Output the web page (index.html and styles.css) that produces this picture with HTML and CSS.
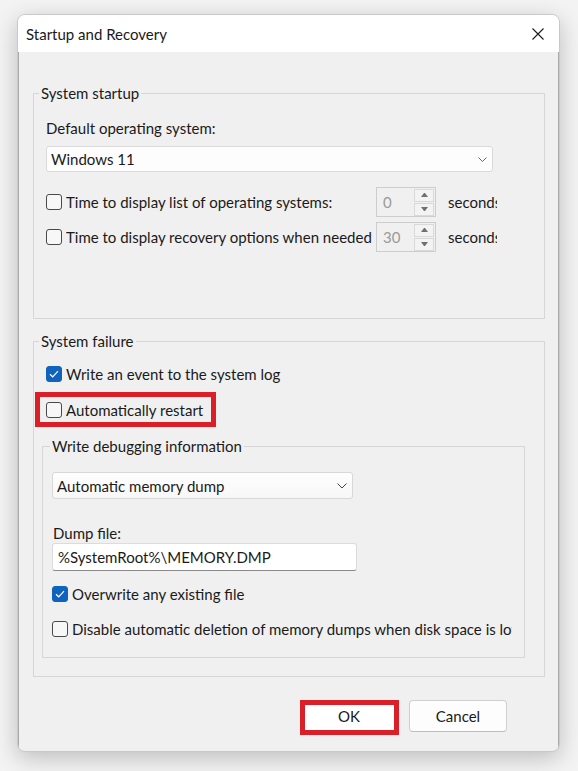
FILE: index.html
```html
<!DOCTYPE html>
<html>
<head>
<meta charset="utf-8">
<link rel="stylesheet" href="styles.css">
</head>
<body>
<div class="dialog">
  <div class="titlebar">
    <span class="title">Startup and Recovery</span>
    <span class="close"><svg width="12" height="12" viewBox="0 0 12 12"><path d="M0.5 0.5 L11.5 11.5 M11.5 0.5 L0.5 11.5" stroke="#1b1b1b" stroke-width="1.1" fill="none"/></svg></span>
  </div>
  <div class="content">
    <fieldset class="group g-startup">
      <legend>System startup</legend>
      <div class="lbl l-default">Default operating system:</div>
      <div class="select sel-os">
        <span>Windows 11</span>
        <svg class="chev" width="9" height="5" viewBox="0 0 9 5"><path d="M0.5 0.5 L4.5 4.5 L8.5 0.5" stroke="#666" stroke-width="1" fill="none"/></svg>
      </div>
      <div class="row spinrow r-first">
        <span class="cb"></span>
        <span class="txt t-time">Time to display list of operating systems:</span>
        <div class="spin">
          <span class="val">0</span>
          <span class="arrows"><span class="arr up"></span><span class="arr down"></span></span>
        </div>
        <span class="sec">seconds</span>
      </div>
      <div class="row spinrow r-second">
        <span class="cb"></span>
        <span class="txt t-time">Time to display recovery options when needed:</span>
        <div class="spin">
          <span class="val">30</span>
          <span class="arrows"><span class="arr up"></span><span class="arr down"></span></span>
        </div>
        <span class="sec">seconds</span>
      </div>
    </fieldset>

    <fieldset class="group g-failure">
      <legend>System failure</legend>
      <div class="row r-event"><span class="cb checked"><svg width="10" height="8" viewBox="0 0 10 8"><path d="M1 4.2 L3.7 6.8 L9 1.2" stroke="#fff" stroke-width="1.2" fill="none"/></svg></span><span class="txt">Write an event to the system log</span></div>
      <div class="row r-restart"><span class="mark"><span class="cb"></span><span class="txt">Automatically restart</span></span></div>

      <fieldset class="group g-debug">
        <legend>Write debugging information</legend>
        <div class="select sel-dump">
          <span>Automatic memory dump</span>
          <svg class="chev" width="10" height="6" viewBox="0 0 10 6"><path d="M0.5 0.5 L5 5 L9.5 0.5" stroke="#444" stroke-width="1" fill="none"/></svg>
        </div>
        <div class="lbl l-dump">Dump file:</div>
        <div class="input">%SystemRoot%\MEMORY.DMP</div>
        <div class="row r-over"><span class="cb checked"><svg width="10" height="8" viewBox="0 0 10 8"><path d="M1 4.2 L3.7 6.8 L9 1.2" stroke="#fff" stroke-width="1.2" fill="none"/></svg></span><span class="txt">Overwrite any existing file</span></div>
        <div class="row r-disable"><span class="cb"></span><span class="txt t-disable">Disable automatic deletion of memory dumps when disk space is low</span></div>
      </fieldset>
    </fieldset>

    <div class="buttons">
      <button class="btn ok">OK</button>
      <button class="btn">Cancel</button>
    </div>
  </div>
</div>
</body>
</html>
```
FILE: styles.css
```css
*, *::before, *::after { box-sizing: border-box; }
html, body { margin: 0; padding: 0; }
body {
  background: #f3f3f3;
  font-family: Lato, "Open Sans", sans-serif;
  font-size: 15px;
  color: #1a1a1a;
  width: 578px;
  height: 771px;
  overflow: hidden;
  padding: 14px 0 0 17px;
}
.dialog {
  width: 543px;
  height: 738px;
  border: 1px solid #c9c9c9;
  border-radius: 8px;
  background: #f0f0f0;
  box-shadow: 0 6px 22px rgba(0,0,0,0.22);
  overflow: hidden;
  display: flex;
  flex-direction: column;
}
.titlebar {
  height: 37px;
  background: #ffffff;
  display: flex;
  align-items: center;
  justify-content: space-between;
  padding: 0 15px 0 8px;
  flex-shrink: 0;
}
.title { line-height: 20px; }
.close { display: flex; width: 12px; height: 12px; }
.content {
  flex: 1;
  padding: 31px 14px 0 15px;
  box-shadow: inset 1px 0 #a9a9a9, inset -1px 0 #a9a9a9;
}
fieldset.group {
  margin: 0;
  border: 1px solid #d6d6d6;
  border-radius: 0;
  padding: 0 12px;
  min-width: 0;
}
fieldset.group > legend {
  padding: 0 2px;
  margin-left: -7px;
  line-height: 20px;
  height: 20px;
}
.g-startup { padding-bottom: 66px !important; }
.g-failure { margin-top: 12px !important; padding-bottom: 18px !important; }
.g-debug {
  margin: 15px 7px 0 -4px !important;
  padding: 0 9px 17px 9px !important;
}
.g-debug > legend { margin-left: -2px !important; }

.lbl { line-height: 20px; height: 20px; }
.l-default { margin-top: 15px; }
.l-dump { margin-top: 24px; padding-left: 1px; }

.select {
  display: flex;
  align-items: center;
  justify-content: space-between;
  background: #fdfdfd;
  border: 1px solid #dadada;
  border-radius: 3px;
  padding: 0 5px 0 4px;
}
.sel-os { margin-top: 8px; height: 26px; width: 447px; }
.sel-dump {
  margin-top: 16px; height: 27px; width: 301px;
  background: linear-gradient(#fefefe, #f7f7f7);
  border-color: #d8d8d8;
}
.input {
  width: 305px;
  height: 28px;
  background: #fff;
  border: 1px solid #dcdcdc;
  border-bottom: 1px solid #8a8a8a;
  border-radius: 3px;
  padding: 0 5px;
  line-height: 26px;
}

.row { display: flex; align-items: center; height: 22px; white-space: nowrap; }
.spinrow { height: 30px; }
.r-first { margin-top: 15px; }
.r-second { margin-top: 5px; }
.r-event { margin-top: 12px; }
.r-restart { margin-top: 14px; }
.r-over { margin-top: 12px; }
.r-disable { margin-top: 13px; }

.cb {
  width: 16px; height: 16px;
  border: 1px solid #4a4a4a;
  border-radius: 3px;
  background: #f7f7f7;
  flex-shrink: 0;
  margin-right: 4px;
  display: flex;
  align-items: center;
  justify-content: center;
}
.cb.checked { background: #0f63bd; border-color: #0f63bd; }
.txt { line-height: 20px; }
.t-time { width: 306px; overflow: hidden; }
.t-disable { width: 440px; overflow: hidden; }

.mark { position: relative; display: flex; align-items: center; }
.mark::after {
  content: "";
  position: absolute;
  left: -11px; top: -8px; width: 181px; bottom: -7px;
  border: 5px solid #db1f28;
}

.spin {
  width: 60px; height: 30px;
  margin-left: 4px;
  border: 1px solid #cdcdcd;
  background: #f0f0f0;
  display: flex;
  align-items: center;
  justify-content: space-between;
  padding: 0 1px 0 6px;
  color: #9a9a9a;
}
.arrows { display: flex; flex-direction: column; gap: 1px; }
.arr {
  width: 20px; height: 13px;
  border: 1px solid #d9d9d9;
  background: #f3f3f3;
  display: flex; align-items: center; justify-content: center;
}
.arr::before { content: ""; width: 7px; height: 4px; border-left: 3.5px solid transparent; border-right: 3.5px solid transparent; }
.up::before { border-bottom: 4px solid #707070; }
.down::before { border-top: 4px solid #707070; }
.sec { margin-left: 12px; width: 49px; overflow: hidden; line-height: 20px; }

.buttons {
  display: flex;
  justify-content: flex-end;
  gap: 11px;
  margin-top: 23px;
  padding-right: 38px;
}
.btn {
  width: 98px; height: 32px;
  font-family: inherit;
  font-size: 15px;
  color: #1a1a1a;
  background: #fdfdfd;
  border: 1px solid #d0d0d0;
  border-bottom-color: #bdbdbd;
  border-radius: 4px;
  padding: 0;
  position: relative;
}
.btn.ok { background: #fff; }
.btn.ok::after {
  content: "";
  position: absolute;
  left: -1px; top: -1px; right: -2px; bottom: -4px;
  border: 5px solid #db1f28;
}
```
